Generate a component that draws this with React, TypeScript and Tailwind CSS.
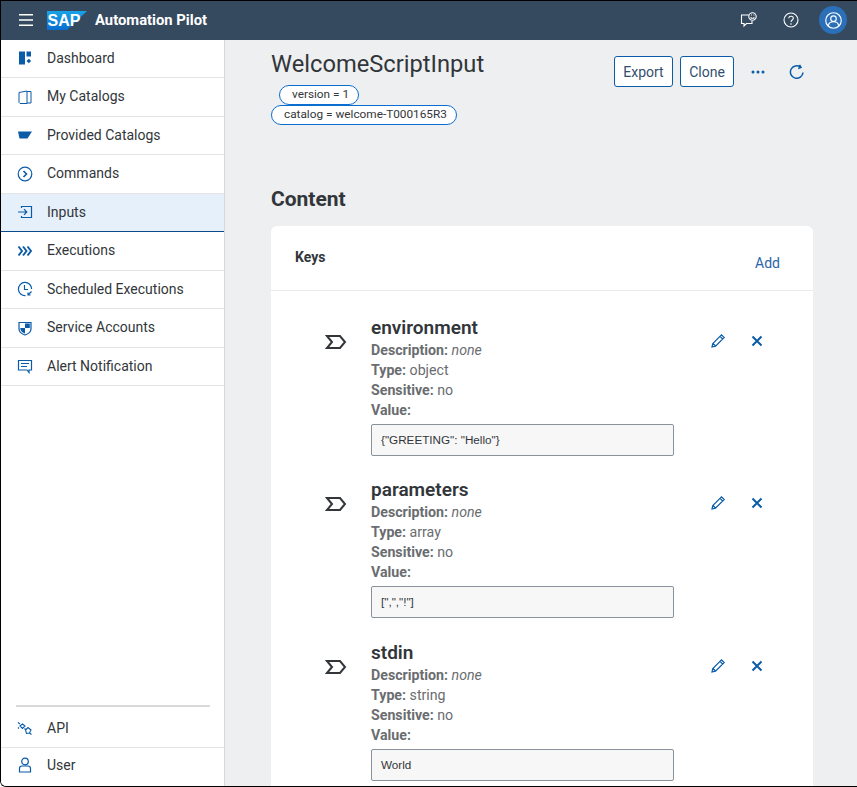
import React from 'react';

const Icon: React.FC<{ children: React.ReactNode; className?: string }> = ({ children, className }) => (
  <svg viewBox="0 0 16 16" width="16" height="16" fill="none" stroke="currentColor" strokeWidth="1.2" className={className}>
    {children}
  </svg>
);

const navTop = [
  {
    label: 'Dashboard',
    icon: (
      <Icon>
        <path d="M2 1.5h6v13H2z M9.5 1.5H14v5H9.5z" fill="currentColor" stroke="none" />
        <path d="M11.8 8.8l2.3 2.2-2.3 2.3-2.3-2.3z" fill="currentColor" stroke="none" />
      </Icon>
    ),
  },
  {
    label: 'My Catalogs',
    icon: (
      <Icon>
        <path d="M2 3.5L10 2v12.5H3l-1-1z M10 2.5h4V14h-4" strokeWidth="1" />
      </Icon>
    ),
  },
  {
    label: 'Provided Catalogs',
    icon: (
      <Icon>
        <path d="M1 4.5h14l-4.5 7h-8z" fill="currentColor" stroke="none" />
      </Icon>
    ),
  },
  {
    label: 'Commands',
    icon: (
      <Icon>
        <circle cx="8" cy="8" r="6.8" />
        <path d="M6.5 5l3 3-3 3" strokeWidth="1.6" />
      </Icon>
    ),
  },
  {
    label: 'Inputs',
    active: true,
    icon: (
      <Icon>
        <path d="M4.5 4V2.500h10v11h-10V12 M1 8h8.500 M7 5.200L9.800 8 7 10.800" />
      </Icon>
    ),
  },
  {
    label: 'Executions',
    icon: (
      <Icon>
        <path d="M1.500 3.500L5 8l-3.500 4.500 M6 3.500L9.500 8 6 12.500 M10.500 3.500L14 8l-3.500 4.500" strokeWidth="1.9" />
      </Icon>
    ),
  },
  {
    label: 'Scheduled Executions',
    icon: (
      <Icon>
        <path d="M8.500 14.600A6.600 6.600 0 1 1 14.600 8 M7.500 4v4.500h3.500 M14.500 10.500l-3.500 3.500 M11 11.500V14h2.500" />
      </Icon>
    ),
  },
  {
    label: 'Service Accounts',
    icon: (
      <Icon>
        <path d="M2 2.500h12V9c0 3-3 5-6 6-3-1-6-3-6-6z" />
        <path d="M8 3.500h4.800V8H8z M3.200 8H8v5.500C5.500 12.500 3.200 11 3.200 8z" fill="currentColor" stroke="none" />
      </Icon>
    ),
  },
  {
    label: 'Alert Notification',
    icon: (
      <Icon>
        <path d="M1.500 2.500h13v9.500h-2.500v2.500L10 12H1.500z M4 5.500h8 M4 8.500h6" />
      </Icon>
    ),
  },
];

const navBottom = [
  {
    label: 'API',
    icon: (
      <Icon>
        <path d="M1 2.500l2 1.500 M14.500 14.500l-2-1.500 M3 6l2.500-2 2.500 2-2.500 2.500z M8.500 10l2.500-2.500 3 2.500-1.500 3-3 .5z M1 7.500l1 1 M7.500 8.500l1 1" strokeWidth="1.1" />
      </Icon>
    ),
  },
  {
    label: 'User',
    icon: (
      <Icon>
        <circle cx="8" cy="4.5" r="3.3" />
        <path d="M2.500 15v-3.500c0-1.500 1-2.500 2.500-2.500h6c1.500 0 2.500 1 2.500 2.500V15z" />
      </Icon>
    ),
  },
];

const keys = [
  { name: 'environment', type: 'object', value: '{"GREETING": "Hello"}' },
  { name: 'parameters', type: 'array', value: '[",","!"]' },
  { name: 'stdin', type: 'string', value: 'World' },
];

const NavItem: React.FC<{ label: string; icon: React.ReactNode; active?: boolean }> = ({ label, icon, active }) => (
  <div
    className={`flex h-[38.5px] shrink-0 items-center border-b pl-[16px] text-[14px] text-[#32363a] ${
      active ? 'border-[#0a4b8c] bg-[#e5f0fa]' : 'border-[#e4e4e4] bg-white'
    }`}
  >
    <span className="flex w-[30px] text-[#0a5ba8]">{icon}</span>
    {label}
  </div>
);

const KeyRow: React.FC<{ name: string; type: string; value: string }> = ({ name, type, value }) => (
  <div className="relative flex h-[162.5px] pl-[54px]">
    <svg viewBox="0 0 22 16" width="22" height="16" fill="none" stroke="#32363a" strokeWidth="2" className="mt-[19px] shrink-0">
      <path d="M2 2h13l5 6-5 6H2l5-6z" />
    </svg>
    <div className="mt-[1px] ml-[24px] w-[303px] text-[14.2px] leading-[20px] text-[#6a6d70]">
      <div className="text-[19px] leading-[24px] font-semibold text-[#32363a]">{name}</div>
      <div>
        <b className="font-bold">Description:</b> <i>none</i>
      </div>
      <div>
        <b className="font-bold">Type:</b> {type}
      </div>
      <div>
        <b className="font-bold">Sensitive:</b> no
      </div>
      <div>
        <b className="font-bold">Value:</b>
      </div>
      <div className="mt-[4px] flex h-[32px] items-center rounded-[2px] border border-[#89919a] bg-[#f7f7f7] px-[9px] font-['Liberation_Sans',sans-serif] text-[11.7px] text-[#32363a]">
        {value}
      </div>
    </div>
    <div className="absolute top-[18px] left-[439px] flex gap-[23px] text-[#0a5ba8]">
      <svg viewBox="0 0 16 16" width="16" height="16" fill="none" stroke="currentColor" strokeWidth="1.2">
        <path d="M2 14l.8-3.500L11.500 1.800l2.700 2.700-8.700 8.700z M10 3.300l2.700 2.700 M3 10.500L5.500 13" />
      </svg>
      <svg viewBox="0 0 16 16" width="16" height="16" fill="none" stroke="currentColor" strokeWidth="2">
        <path d="M3.500 3.500l9 9 M12.500 3.500l-9 9" />
      </svg>
    </div>
  </div>
);

const App: React.FC = () => (
  <div className="flex h-[787px] w-[857px] flex-col overflow-hidden rounded-bl-[6px] border-t border-b border-l border-black bg-[#edeff0] font-['Roboto',sans-serif]">
    <header className="flex h-[38.5px] shrink-0 items-center bg-[#354a5f] text-white">
      <svg viewBox="0 0 16 16" width="16" height="16" stroke="currentColor" strokeWidth="1.4" className="ml-[17px]">
        <path d="M1 2.800h14 M1 8h14 M1 13.200h14" />
      </svg>
      <svg viewBox="0 0 40 19" width="40" height="19" className="ml-[13px]">
        <defs>
          <linearGradient id="sap" x1="0" y1="0" x2="0" y2="1">
            <stop offset="0" stopColor="#1aa3e8" />
            <stop offset="1" stopColor="#0a6ed1" />
          </linearGradient>
        </defs>
        <path d="M0 0h40L20 19H0z" fill="url(#sap)" />
        <text x="0.5" y="15" fontSize="16" fontWeight="800" fill="#fff" fontFamily="'Liberation Sans', sans-serif">
          SAP
        </text>
      </svg>
      <span className="ml-[8px] text-[14.8px] font-bold">Automation Pilot</span>
      <div className="ml-auto flex items-center">
        <svg viewBox="0 0 18 16" width="18" height="16" fill="none" stroke="currentColor" strokeWidth="1.1" className="mr-[25px]">
          <path d="M9 3H1.500v8.500H4V14l2.500-2.500H12V9" />
          <circle cx="12.5" cy="4.5" r="3.7" />
          <path d="M10.500 5.500c1 1 3 1 4 0 M11 3h1 M13.500 3h1" />
        </svg>
        <svg viewBox="0 0 16 16" width="16" height="16" fill="none" stroke="currentColor" strokeWidth="1.1" className="mr-[20px]">
          <circle cx="8" cy="8" r="7" />
          <path d="M5.800 6.200C5.800 3.500 10.300 3.500 10.300 6.200 10.300 8 8 8 8 10" />
          <circle cx="8" cy="12" r=".8" fill="currentColor" stroke="none" />
        </svg>
        <div className="mr-[10px] flex h-[28px] w-[28px] items-center justify-center rounded-full bg-[#2a6fb8]">
          <svg viewBox="0 0 16 16" width="17" height="17" fill="none" stroke="currentColor" strokeWidth="1.1">
            <circle cx="8" cy="8" r="7.3" />
            <circle cx="8" cy="6.3" r="2.6" />
            <path d="M3.300 13c0-3 1.700-3.800 4.700-3.800s4.700.8 4.700 3.800" />
          </svg>
        </div>
      </div>
    </header>
    <div className="flex min-h-0 flex-1">
      <aside className="flex w-[224px] shrink-0 flex-col border-r border-[#d9d9d9] bg-white">
        {navTop.map((item) => (
          <NavItem key={item.label} label={item.label} icon={item.icon} active={item.active} />
        ))}
        <div className="mt-auto mr-[14px] mb-[2.5px] ml-[15px] h-[2px] bg-[#d9d9d9]" />
        <NavItem label={navBottom[0].label} icon={navBottom[0].icon} />
        <div className="flex h-[38px] shrink-0 items-center pb-[4px] pl-[16px] text-[14px] text-[#32363a]">
          <span className="flex w-[30px] text-[#0a5ba8]">{navBottom[1].icon}</span>
          {navBottom[1].label}
        </div>
      </aside>
      <main className="min-w-0 flex-1 overflow-hidden pt-[8.5px] pl-[46px]">
        <div className="flex items-start justify-between pr-[52px]">
          <div>
            <h1 className="text-[23.7px] leading-[32px] text-[#32363a]">WelcomeScriptInput</h1>
            <div className="mt-[5px] flex flex-col items-start">
              <span className="ml-[8px] flex h-[20px] items-center rounded-full border border-[#0a6ed1] bg-white pr-[9px] pl-[12px] text-[11.8px] text-[#32363a]">
                version = 1
              </span>
              <span className="flex h-[20px] items-center rounded-full border border-[#0a6ed1] bg-white pr-[9px] pl-[12px] text-[11.8px] text-[#32363a]">
                catalog = welcome-T000165R3
              </span>
            </div>
          </div>
          <div className="mt-[8px] flex items-center text-[#0a5ba8]">
            <button className="h-[31px] w-[59px] rounded-[3px] border border-[#0a5ba8] bg-white pt-[1px] text-[14px] text-[#32506e]">Export</button>
            <button className="ml-[7px] h-[31px] w-[54px] rounded-[3px] border border-[#0a5ba8] bg-white pt-[1px] text-[14px] text-[#32506e]">Clone</button>
            <svg viewBox="0 0 16 16" width="16" height="16" fill="currentColor" className="ml-[16px]">
              <circle cx="3" cy="8" r="1.5" />
              <circle cx="8" cy="8" r="1.5" />
              <circle cx="13" cy="8" r="1.5" />
            </svg>
            <svg viewBox="0 0 16 16" width="16" height="16" fill="none" stroke="currentColor" strokeWidth="1.5" className="ml-[23px]">
              <path d="M14 8.500A6.300 6.300 0 1 1 11.500 3 M10.500 .8l1.500 2.500-2.800 1.200" />
            </svg>
          </div>
        </div>
        <h2 className="mt-[60px] text-[21px] leading-[28px] font-bold text-[#32363a]">Content</h2>
        <section className="mt-[13px] w-[542px] rounded-t-[6px] bg-white">
          <div className="flex h-[65px] items-start justify-between border-b border-[#ebebeb] px-[24px] pt-[21px]">
            <span className="text-[14px] font-bold text-[#32363a]">Keys</span>
            <span className="mt-[6px] mr-[9px] text-[14px] text-[#2a64a8]">Add</span>
          </div>
          <div className="pt-[23.75px]">
            {keys.map((key) => (
              <KeyRow key={key.name} name={key.name} type={key.type} value={key.value} />
            ))}
          </div>
        </section>
      </main>
    </div>
  </div>
);

export default App;
